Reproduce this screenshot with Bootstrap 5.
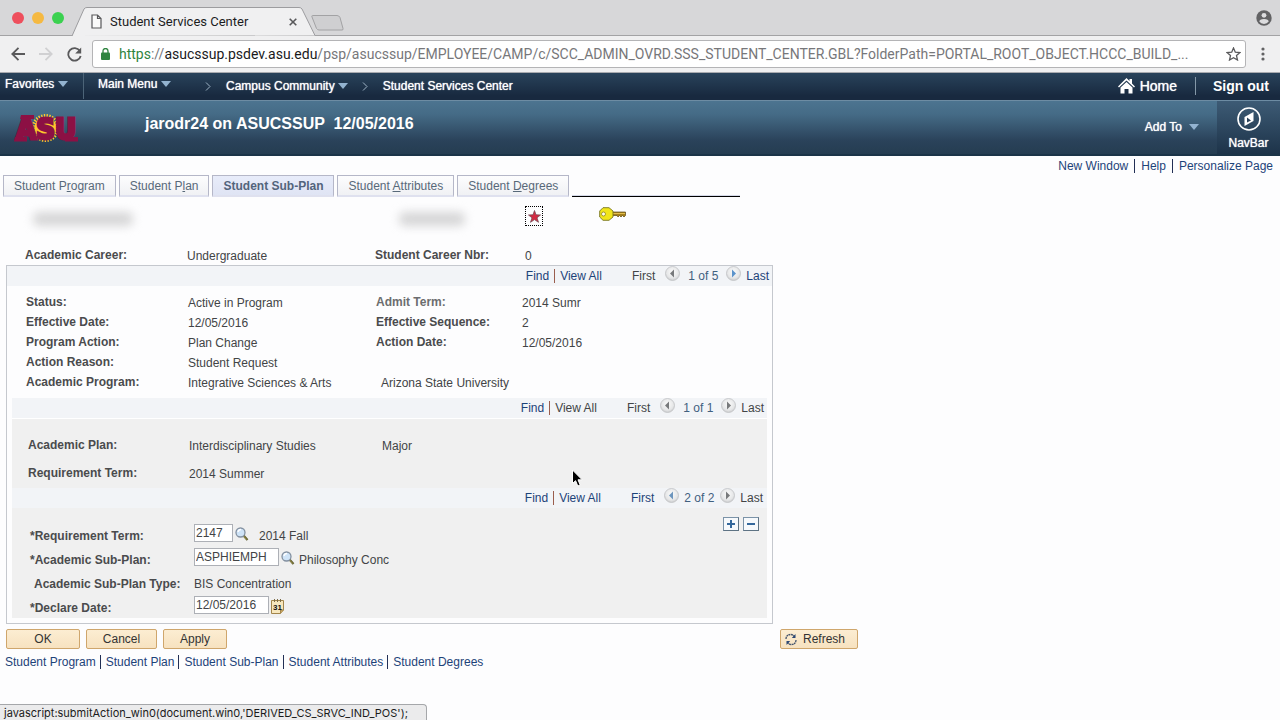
<!DOCTYPE html>
<html lang="en">
<head>
<meta charset="utf-8">
<meta name="viewport" content="width=device-width, initial-scale=1">
<title>Student Services Center</title>
<link href="https://cdn.jsdelivr.net/npm/bootstrap@5.3.0/dist/css/bootstrap.min.css" rel="stylesheet">
<style>
  body { font: 12px/20px "Liberation Sans", Arial, sans-serif; color: #424446; background: #fdfdfe; }
  a { color: #1d4379; text-decoration: none; }
  a:hover { text-decoration: underline; }
  svg { display: block; flex: none; }
  button { font: inherit; }
  .plain { border: 0; background: none; padding: 0; color: inherit; }

  /* browser frame */
  .tabstrip { height: 36px; background: #d7d7d9; box-shadow: inset 0 -1px #a3a3a5; font: 13px/20px Roboto, sans-serif; }
  .light { width: 12px; height: 12px; border-radius: 50%; }
  .pagetab { width: 246px; height: 29px; margin-left: 8px; padding: 0 21px 0 19px; color: #1c1c1e; }
  .pagetab > .tabshape { position: absolute; left: 0; top: 0; z-index: 0; }
  .pagetab > .over { z-index: 1; }
  .toolbar { height: 37px; background: #f0f0f1; border-bottom: 1px solid #a9abb0; }
  .address { height: 28px; border: 1px solid #b4b4b6; border-radius: 3px; background: #fff; font: 14px/26px Roboto, sans-serif; color: #77777a; }
  .address .scheme { color: #2f8440; }
  .address .host { color: #1a1a1c; }
  .url { outline: 0; min-width: 0; }

  /* portal header */
  .crumbs { height: 27px; padding-bottom: 1px; background: linear-gradient(#29435b, #18293f 85%); color: #fff; text-shadow: 0 0 1px #fff; }
  .crumbs a, .banner a { color: #fff; }
  .caret { width: 0; height: 0; border: 5px solid transparent; border-top: 6px solid #93b3d0; border-bottom: 0; }
  .cell-fav { width: 84px; height: 26px; padding-left: 5px; border-right: 1px solid #4c6478; line-height: 22px; }
  .cell-menu { width: 107px; padding-left: 14px; line-height: 22px; height: 26px; }
  .line-v { width: 1px; height: 18px; background: #8498a8; }
  .home { font-size: 14px; }
  .signout { font-size: 14px; }
  .banner { height: 56px; background: linear-gradient(#4c7490, #456b86 25%, #2a425a 75%, #253d51); border-top: 1px solid #6d8ca3; border-bottom: 2px solid #1b3448; color: #fff; }
  .banner h1 { font-size: 16px; line-height: 20px; font-weight: 700; white-space: pre; margin: 0 0 8px 67px; }
  .navbar-btn { width: 63px; height: 53px; margin-left: 18px; background: linear-gradient(#3d5b75, #1d3349); text-shadow: 0 0 1px #fff; line-height: 16px; }
  .addto { margin-bottom: 2px; text-shadow: 0 0 1px #fff; }
  .bar { width: 1px; height: 14px; background: #222f55; margin: 0 6px; }

  /* page tabs */
  .quicklinks { height: 19px; padding-right: 7px; }
  .formtabs { margin: 0 0 0 3px; gap: 3px; }
  .formtab { height: 22px; padding: 0 10px; line-height: 20px; border: 1px solid #b5b7c8; border-bottom: 2px solid #dfe1ef; background: linear-gradient(#fdfdfe, #f0f1f4); color: #586979; }
  .formtab.current { background: linear-gradient(#e8ecfa, #dfe4f4); font-weight: 700; color: #53647c; }
  .tabrule { width: 168px; height: 2px; border-top: 1px solid #d5d9e8; border-bottom: 1px solid #000; }

  /* record panels */
  .record { max-width: 767px; margin-left: 6px; }
  .identity { height: 48px; padding-left: 27px; }
  .smudge { width: 100px; height: 14px; margin-bottom: 4px; background: #d6d6d7; filter: blur(5px); border-radius: 6px; }
  .smudge.short { width: 66px; }
  .focused { border: 1px dotted #000; width: 18px; height: 20px; }
  .panel { border: 1px solid #c5c8ce; }
  .fields { display: grid; grid-template-columns: 162px 188px 146px 1fr; padding-left: 19px; }
  .fields dt, .fields dd { margin: 0; line-height: 20px; }
  .fields dd { padding-top: 1px; height: 20px; }
  .fields dt, .entry label, .entry .name { font-weight: 700; color: #4a4b4d; }
  .fields .dim { color: #6c6d6f; }
  .fields .wide { grid-column: 3 / 5; padding-left: 5px; }
  .pager { height: 20px; background: #f2f4f7; padding-right: 3px; }
  .pager .count { color: #41607f; margin: 0 8px; }
  .pager .sep { width: 1px; height: 14px; background: #9a5d4d; margin: 0 5px; }
  .pager .first { margin: 0 10px 0 30px; }
  .pager .last { margin-left: 5px; }
  .pager .top { margin-bottom: 5px; }
  .pager.inner .count { margin: 0 6px 0 5px; }
  .level2 { margin: 6px 5px 5px; background: #f0f0f0; }
  .level2 > .pager:first-child { height: 21px; border-bottom: 1px solid #fff; }
  .level2 .fields { grid-template-columns: 161px 193px 1fr; padding: 16px 0 5px 16px; row-gap: 8px; }
  .pm { width: 16px; height: 14px; border: 1px solid #7b93a8; border-right-color: #5e7384; border-bottom-color: #5e7384; background: #f6f9fc; padding: 0; }
  .pmrow { height: 14px; padding: 9px 8px 0 0; }
  .entry { padding-left: 18px; }
  .entry > div { height: 24px; }
  .entry label, .entry .name { width: 164px; padding-top: 3px; }
  .entry .name { padding-left: 4px; }
  .entry input { height: 18px; margin-bottom: 3px; padding: 0 1px; border: 1px solid #adb0b6; background: #fff; color: #424446; line-height: 16px; font-size: 12px; border-radius: 0; }
  .w-term { width: 39px; } .w-plan { width: 85px; } .w-date { width: 75px; }
  .entry .note { padding-top: 4px; }
  .entry .pick { margin: 0 4px 0 2px; }
  .entry .pick.far { margin-right: 10px; }
  .push { height: 20px; line-height: 18px; border: 1px solid #cfa66c; border-radius: 2px; background: linear-gradient(#fcedd2, #f7e2c0); color: #333; padding: 0; }
  .b-ok { width: 74px; } .b-cancel { width: 71px; } .b-apply { width: 64px; }
  .b-refresh { width: 78px; }
  .actions { margin: 5px 0 0 6px; }
  .footlinks { margin: 3px 0 0 5px; }
  .footlinks .bar { margin: 0 5px 0 4px; }
  .status { position: absolute; left: 0; bottom: 0; width: 427px; height: 16px; padding-left: 4px; border: 1px solid #a5a7aa; border-left: 0; border-bottom: 0; border-radius: 0 4px 0 0; background: #ebebec; color: #1b1b1b; font: 11px/16px Inter, sans-serif; white-space: nowrap; }
  .pointer { position: absolute; left: 571px; top: 469px; }
</style>
</head>
<body class="position-relative min-vh-100">

<svg width="0" height="0" class="position-absolute" aria-hidden="true">
  <defs>
    <radialGradient id="knob" cx=".5" cy=".4" r=".6"><stop offset="0" stop-color="#fbfbfb"/><stop offset=".7" stop-color="#e6e7e8"/><stop offset="1" stop-color="#c9cacc"/></radialGradient>
    <symbol id="prev" viewBox="0 0 15 15"><circle cx="7.5" cy="7.5" r="7" fill="url(#knob)" stroke="#c0c2c4" stroke-width=".8"/><path d="M9 3.500V11.500L5 7.500Z" fill="currentColor"/></symbol>
    <symbol id="next" viewBox="0 0 15 15"><circle cx="7.5" cy="7.5" r="7" fill="url(#knob)" stroke="#c0c2c4" stroke-width=".8"/><path d="M6 3.500V11.500L10 7.500Z" fill="currentColor"/></symbol>
    <symbol id="lens" viewBox="0 0 14 14"><path d="M8.500 8.500L12.500 13" stroke="#5c5a2c" stroke-width="2.200"/><path d="M8.200 8.600L11.800 12.600" stroke="#c5b860" stroke-width=".7"/><circle cx="5.500" cy="5.500" r="4.500" fill="#cfe4f8" stroke="#8390a0" stroke-width="1.300"/><path d="M3 5A3 3 0 0 1 6 2.500" stroke="#fff" stroke-width="1.300" fill="none"/></symbol>
  </defs>
</svg>

<!-- Window tabs -->
<div class="tabstrip d-flex align-items-end">
  <div class="d-flex align-self-center" style="gap:8px;padding-left:12px">
    <span class="light" style="background:#ee4f5d"></span>
    <span class="light" style="background:#f5b942"></span>
    <span class="light" style="background:#3bd150"></span>
  </div>
  <div class="pagetab position-relative d-flex align-items-center">
    <svg class="tabshape" width="246" height="29" viewBox="0 0 246 29"><path d="M0 29L12 2Q13 .5 15 .5H227Q229 .5 230 2L243 28.500" fill="#f0f0f1" stroke="#9c9c9f"/></svg>
    <svg class="over" width="11" height="15" viewBox="0 0 11 15" fill="#fafafa" stroke="#58585a" stroke-width="1.200"><path d="M1 1H6.500L10 4.500V14H1ZM6.500 1V4.500H10"/></svg>
    <span class="over ms-2 flex-grow-1">Student Services Center</span>
    <button class="plain over" aria-label="Close tab"><svg width="8" height="8" viewBox="0 0 8 8"><path d="M.7.7L7.300 7.300M7.300.7L.7 7.300" stroke="#59595b" stroke-width="1.600"/></svg></button>
  </div>
  <button class="plain align-self-center" style="margin:10px 0 0 -8px" aria-label="New tab"><svg width="35" height="18" viewBox="0 0 35 18"><path d="M2.500 1.500H27Q29 1.500 30 3.500L33 14.500Q33.500 16 32 16H9Q7.500 16 6.500 14.500L2 3Q1.500 1.500 2.500 1.500Z" fill="#cfcfd1" stroke="#a2a2a4"/></svg></button>
  <button class="plain align-self-center ms-auto" style="margin-right:8px" aria-label="Profile"><svg width="16" height="16" viewBox="0 0 16 16"><circle cx="8" cy="8" r="7.700" fill="#626264"/><circle cx="8" cy="5.300" r="2.400" fill="#dcdcde"/><path d="M3.300 11.600Q3.500 9 8 9T12.700 11.600Q11 14 8 14T3.300 11.600Z" fill="#dcdcde"/></svg></button>
</div>

<!-- Address bar -->
<div class="toolbar d-flex align-items-center">
  <button class="plain" style="margin-left:11px" aria-label="Back"><svg width="14" height="14" viewBox="0 0 14 14"><path d="M14 7H1.500M7.500 .8L1.300 7L7.500 13.200" fill="none" stroke="#59595b" stroke-width="1.800"/></svg></button>
  <button class="plain" style="margin-left:14px" aria-label="Forward"><svg width="14" height="14" viewBox="0 0 14 14"><path d="M0 7H12.500M6.500 .8L12.700 7L6.500 13.200" fill="none" stroke="#d0d0d2" stroke-width="1.800"/></svg></button>
  <button class="plain" style="margin-left:14px" aria-label="Reload"><svg width="15" height="15" viewBox="0 0 15 15"><path d="M12.800 3.800A6.300 6.300 0 1 0 13.700 9" fill="none" stroke="#59595b" stroke-width="1.800"/><path d="M14.200 .5V6.500H8.200Z" fill="#59595b"/></svg></button>
  <div class="address d-flex align-items-center flex-grow-1" style="margin-left:10px;min-width:0">
    <svg style="margin:0 9px 0 8px" width="9" height="12" viewBox="0 0 9 12"><rect y="4.500" width="9" height="7.500" rx="1" fill="#2f8440"/><path d="M2 5V3A2.500 2.500 0 0 1 7 3V5" fill="none" stroke="#2f8440" stroke-width="1.300"/></svg>
    <div class="url flex-grow-1 text-truncate" role="textbox" aria-label="Address" contenteditable="true" spellcheck="false"><span class="scheme">https</span>://<span class="host">asucssup.psdev.asu.edu</span>/psp/asucssup/EMPLOYEE/CAMP/c/SCC_ADMIN_OVRD.SSS_STUDENT_CENTER.GBL?FolderPath=PORTAL_ROOT_OBJECT.HCCC_BUILD_...</div>
    <button class="plain" style="margin:0 4px" aria-label="Bookmark"><svg width="15" height="14" viewBox="0 0 15 14"><path d="M7.500 1L9.300 5.200L14 5.600L10.500 8.600L11.500 13L7.500 10.700L3.500 13L4.500 8.600L1 5.600L5.700 5.200Z" fill="none" stroke="#59595b" stroke-width="1.300"/></svg></button>
  </div>
  <button class="plain" style="margin:0 15px" aria-label="Menu"><svg width="4" height="14" viewBox="0 0 4 14" fill="#626264"><circle cx="2" cy="2" r="1.600"/><circle cx="2" cy="7" r="1.600"/><circle cx="2" cy="12" r="1.600"/></svg></button>
</div>

<!-- Breadcrumb menu -->
<nav class="crumbs d-flex align-items-center" aria-label="Breadcrumb">
  <div class="cell-fav d-flex"><a href="#">Favorites</a><span class="caret mt-2 ms-1"></span></div>
  <div class="cell-menu d-flex"><a href="#">Main Menu</a><span class="caret mt-2 ms-1"></span></div>
  <svg style="margin:0 15px 0 14px" width="6" height="9" viewBox="0 0 6 9"><path d="M1 .5L5 4.500L1 8.500" fill="none" stroke="#9fb4c6"/></svg>
  <a href="#">Campus Community</a><span class="caret" style="margin-left:3px"></span>
  <svg style="margin:0 15px 0 14px" width="6" height="9" viewBox="0 0 6 9"><path d="M1 .5L5 4.500L1 8.500" fill="none" stroke="#9fb4c6"/></svg>
  <a href="#">Student Services Center</a>
  <a href="#" class="home ms-auto d-flex align-items-center"><svg style="margin-right:5px" width="17" height="16" viewBox="0 0 17 16" fill="#fff"><path d="M8.500 0L11.500 3V1H14V5.500L17 8.500L16 9.500L8.500 2.500L1 9.500L0 8.500Z"/><path d="M8.500 4L14.500 9.500V15.500H10.500V11H6.500V15.500H2.500V9.500Z"/></svg>Home</a>
  <span class="line-v" style="margin:0 17px 0 18px"></span>
  <a href="#" class="signout fw-bold" style="margin-right:11px;text-shadow:none">Sign out</a>
</nav>

<!-- Banner -->
<header class="banner d-flex align-items-center">
  <svg style="margin-left:14px" width="64" height="50" viewBox="0 0 64 50" role="img" aria-label="ASU" font-family="'DejaVu Sans Condensed', 'DejaVu Sans', sans-serif" font-stretch="condensed" font-weight="700" font-size="29" fill="#8c1044" stroke="#8c1044">
    <circle cx="31.500" cy="25" r="11" fill="#ffc72c" stroke="none"/>
    <circle cx="31.500" cy="25" r="12" fill="none" stroke="#ffc72c" stroke-width="4" stroke-dasharray="1.300 1.300"/>
    <path d="M1 34H13V38.500H0ZM51 34H64V38.500H51ZM7 12H20V16H6Z" stroke="none"/>
    <text x="2" y="36" stroke-width="3">ASU</text>
  </svg>
  <h1>jarodr24 on ASUCSSUP  12/05/2016</h1>
  <button class="plain addto ms-auto d-flex align-items-center">Add To<span class="caret" style="margin-left:7px"></span></button>
  <button class="plain navbar-btn d-flex flex-column align-items-center"><svg style="margin:6px 0 4px" width="24" height="24" viewBox="0 0 24 24"><circle cx="12" cy="12" r="11" fill="none" stroke="#fff" stroke-width="1.600"/><path d="M7.500 10L16.500 5V14L7.500 19Z" fill="#fff"/><path d="M10 10.500L14 13.500L10 15.500Z" fill="#294159"/></svg>NavBar</button>
</header>

<div class="quicklinks d-flex align-items-center justify-content-end">
  <a href="#">New Window</a><span class="bar"></span><a href="#">Help</a><span class="bar"></span><a href="#">Personalize Page</a>
</div>

<main>
  <nav class="formtabs d-flex align-items-end flex-wrap" aria-label="Student pages">
    <a href="#" class="formtab">Student P<u>r</u>ogram</a>
    <a href="#" class="formtab">Student P<u>l</u>an</a>
    <a href="#" class="formtab current" aria-current="page">Student Sub-Plan</a>
    <a href="#" class="formtab">Student <u>A</u>ttributes</a>
    <a href="#" class="formtab">Student <u>D</u>egrees</a>
    <span class="tabrule"></span>
  </nav>

  <section class="record">
    <div class="identity d-flex align-items-center">
      <span class="smudge"></span>
      <span class="smudge short" style="margin-left:266px"></span>
      <button class="plain focused d-flex align-items-center justify-content-center" style="margin:0 56px 10px 60px" aria-label="Positive service indicator"><svg width="13" height="13" viewBox="0 0 13 13"><path d="M6.500.5L8 4.800L12.500 5L9 7.800L10.500 12.300L6.500 9.600L2.500 12.300L4 7.800L.5 5L5 4.800Z" fill="#d42a42" stroke="#754b55" stroke-width=".8"/></svg></button>
      <svg style="margin-bottom:14px" width="27" height="14" viewBox="0 0 27 14" role="img" aria-label="Key"><path d="M12 5H26.500V8.500L25 10L23.500 8.500L22 10L20.500 8.500L19 10L18 8.500H12Z" fill="#a5801c" stroke="#5e4a14" stroke-width=".7"/><path d="M13 6.500H26" stroke="#e5c04c"/><path d="M4 .7H10L14 4V10L10 13.300H4L.7 10V4Z" fill="#f1e51a" stroke="#77751f" stroke-width=".9"/><circle cx="4.500" cy="7" r="2" fill="#fdfdf0" stroke="#8f8420" stroke-width=".8"/></svg>
    </div>
    <dl class="fields mb-0">
      <dt>Academic Career:</dt><dd>Undergraduate</dd><dt>Student Career Nbr:</dt><dd style="padding-left:4px">0</dd>
    </dl>

    <div class="panel">
      <div class="pager d-flex align-items-center justify-content-end">
        <a href="#">Find</a><span class="sep"></span><a href="#">View All</a>
        <span class="first">First</span><button class="plain top" disabled aria-label="Previous" style="color:#77797b"><svg width="15" height="15"><use href="#prev"/></svg></button>
        <span class="count">1 of 5</span><button class="plain top" aria-label="Next" style="color:#5b93cb"><svg width="15" height="15"><use href="#next"/></svg></button><a href="#" class="last">Last</a>
      </div>
      <dl class="fields mb-0" style="padding-top:6px">
        <dt>Status:</dt><dd>Active in Program</dd><dt class="dim">Admit Term:</dt><dd>2014 Sumr</dd>
        <dt>Effective Date:</dt><dd>12/05/2016</dd><dt>Effective Sequence:</dt><dd>2</dd>
        <dt>Program Action:</dt><dd>Plan Change</dd><dt>Action Date:</dt><dd>12/05/2016</dd>
        <dt>Action Reason:</dt><dd style="grid-column:2/5">Student Request</dd>
        <dt>Academic Program:</dt><dd>Integrative Sciences &amp; Arts</dd><dd class="wide">Arizona State University</dd>
      </dl>

      <div class="level2">
        <div class="pager d-flex align-items-center justify-content-end">
          <a href="#">Find</a><span class="sep"></span><span>View All</span>
          <span class="first">First</span><button class="plain top" disabled aria-label="Previous" style="color:#77797b"><svg width="15" height="15"><use href="#prev"/></svg></button>
          <span class="count">1 of 1</span><button class="plain top" disabled aria-label="Next" style="color:#77797b"><svg width="15" height="15"><use href="#next"/></svg></button><span class="last">Last</span>
        </div>
        <dl class="fields mb-0">
          <dt>Academic Plan:</dt><dd>Interdisciplinary Studies</dd><dd>Major</dd>
          <dt>Requirement Term:</dt><dd>2014 Summer</dd>
        </dl>
        <div class="pager inner d-flex align-items-center justify-content-end pe-1">
          <a href="#">Find</a><span class="sep"></span><a href="#">View All</a>
          <a href="#" class="first">First</a><button class="plain top" aria-label="Previous" style="color:#6d95bd"><svg width="15" height="15"><use href="#prev"/></svg></button>
          <span class="count">2 of 2</span><button class="plain top" disabled aria-label="Next" style="color:#77797b"><svg width="15" height="15"><use href="#next"/></svg></button><span class="last">Last</span>
        </div>
        <div class="pmrow d-flex justify-content-end gap-1">
          <button class="pm" aria-label="Add row"><svg width="14" height="12" viewBox="0 0 14 12"><path d="M3 6H11M7 2V10" stroke="#34689c" stroke-width="2"/></svg></button>
          <button class="pm" aria-label="Delete row"><svg width="14" height="12" viewBox="0 0 14 12"><path d="M3 6H11" stroke="#34689c" stroke-width="2"/></svg></button>
        </div>
        <form class="entry">
          <div class="d-flex align-items-center"><label for="term">*Requirement Term:</label><input id="term" class="w-term" value="2147"><button type="button" class="plain pick far" aria-label="Look up term"><svg width="14" height="14"><use href="#lens"/></svg></button><span class="note">2014 Fall</span></div>
          <div class="d-flex align-items-center"><label for="plan">*Academic Sub-Plan:</label><input id="plan" class="w-plan" value="ASPHIEMPH"><button type="button" class="plain pick" aria-label="Look up sub-plan"><svg width="14" height="14"><use href="#lens"/></svg></button><span class="note">Philosophy Conc</span></div>
          <div class="d-flex align-items-center"><span class="name">Academic Sub-Plan Type:</span><span class="note">BIS Concentration</span></div>
          <div class="d-flex align-items-center"><label for="declared">*Declare Date:</label><input id="declared" class="w-date" value="12/05/2016"><button type="button" class="plain pick" aria-label="Choose date"><svg width="13" height="15" viewBox="0 0 13 15"><path d="M.5 1.500H12.500V11L9.500 14.500H.5Z" fill="#f7e7bd" stroke="#a2854b"/><path d="M12.500 11H9.500V14.500" fill="#cba963" stroke="#a2854b"/><path d="M3.500 0V3M6.500 0V3M9.500 0V3" stroke="#7c6c47"/><text x="2" y="10.500" font-family="Liberation Sans" font-size="8" font-weight="700" fill="#111">31</text></svg></button></div>
        </form>
      </div>
    </div>
  </section>

  <div class="actions d-flex">
    <button class="push b-ok">OK</button>
    <button class="push b-cancel" style="margin:0 6px">Cancel</button>
    <button class="push b-apply">Apply</button>
    <button class="push b-refresh d-flex align-items-center" style="margin-left:553px;padding-left:4px"><svg style="margin-right:6px" width="12" height="13" viewBox="0 0 12 13" fill="none" stroke="#44546c" stroke-width="1.300"><path d="M1 6Q1.200 1.500 6 1.500Q8 1.500 9.800 4" stroke-dasharray="2 .5"/><path d="M11 7Q10.800 11.500 6 11.500Q4 11.500 2.200 9" stroke-dasharray="2 .5"/><path d="M10.500 1V5H6.800ZM1.500 12V8H5.200Z" fill="#2b4775" stroke="none"/></svg>Refresh</button>
  </div>
  <nav class="footlinks d-flex align-items-center" aria-label="Student pages, foot">
    <a href="#">Student Program</a><span class="bar"></span><a href="#">Student Plan</a><span class="bar"></span><a href="#">Student Sub-Plan</a><span class="bar"></span><a href="#">Student Attributes</a><span class="bar"></span><a href="#">Student Degrees</a>
  </nav>
</main>

<svg class="pointer" width="12" height="19" viewBox="0 0 12 19"><path d="M1.500 1V14.500L4.600 11.700L6.800 17L9.200 16L7 10.800H11.200Z" fill="#000" stroke="#fff"/></svg>
<div class="status">javascript:submitAction_win0(document.win0,'DERIVED_CS_SRVC_IND_POS');</div>

<script src="https://cdn.jsdelivr.net/npm/bootstrap@5.3.0/dist/js/bootstrap.bundle.min.js"></script>
</body>
</html>
